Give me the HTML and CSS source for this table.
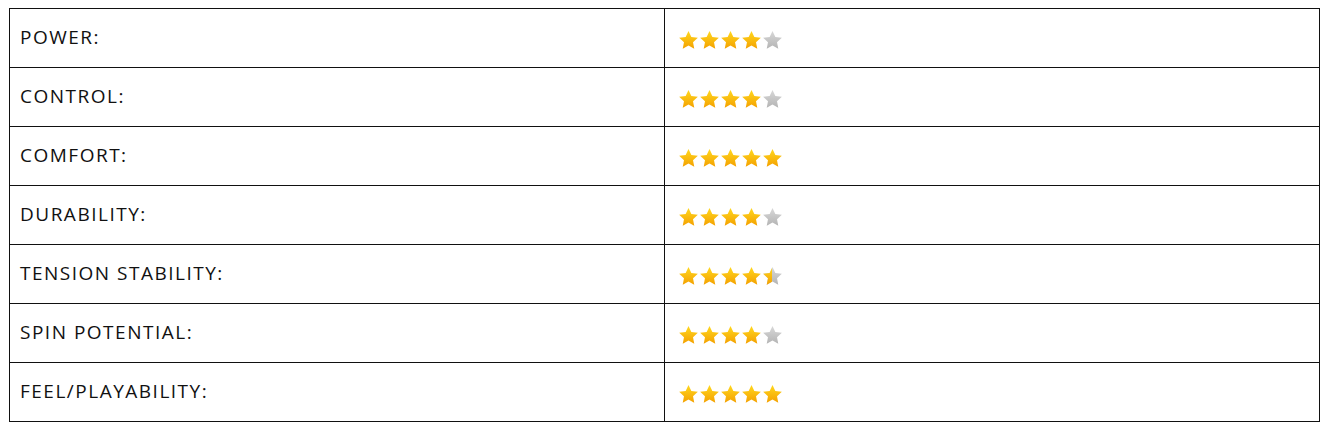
FILE: index.html
```html
<!DOCTYPE html>
<html lang="en">
<head>
  <meta charset="UTF-8">
  <title>Ratings</title>
  <link rel="stylesheet" href="styles.css">
</head>
<body>
  <svg width="0" height="0" style="position:absolute">
    <defs>
      <linearGradient id="gold" x1="0" y1="0" x2="0" y2="1">
        <stop offset="0" stop-color="#ffd81f"/>
        <stop offset="1" stop-color="#f4a100"/>
      </linearGradient>
      <linearGradient id="grey" x1="0" y1="0" x2="0" y2="1">
        <stop offset="0" stop-color="#d8d8d8"/>
        <stop offset="1" stop-color="#b4b4b4"/>
      </linearGradient>
      <clipPath id="left-half"><rect x="0" y="0" width="9.5" height="20"/></clipPath>
      <symbol id="star" viewBox="0 0 20 20">
        <path d="M10 1l2.7 5.7 6.2.7-4.6 4.2 1.2 6.2L10 14.8l-5.5 3 1.2-6.2L1.1 7.4l6.2-.7z"/>
      </symbol>
    </defs>
  </svg>

  <table class="specs">
    <tr>
      <td class="label">POWER:</td>
      <td class="stars"><svg class="star on"><use href="#star"/></svg><svg class="star on"><use href="#star"/></svg><svg class="star on"><use href="#star"/></svg><svg class="star on"><use href="#star"/></svg><svg class="star off"><use href="#star"/></svg></td>
    </tr>
    <tr>
      <td class="label">CONTROL:</td>
      <td class="stars"><svg class="star on"><use href="#star"/></svg><svg class="star on"><use href="#star"/></svg><svg class="star on"><use href="#star"/></svg><svg class="star on"><use href="#star"/></svg><svg class="star off"><use href="#star"/></svg></td>
    </tr>
    <tr>
      <td class="label">COMFORT:</td>
      <td class="stars"><svg class="star on"><use href="#star"/></svg><svg class="star on"><use href="#star"/></svg><svg class="star on"><use href="#star"/></svg><svg class="star on"><use href="#star"/></svg><svg class="star on"><use href="#star"/></svg></td>
    </tr>
    <tr>
      <td class="label">DURABILITY:</td>
      <td class="stars"><svg class="star on"><use href="#star"/></svg><svg class="star on"><use href="#star"/></svg><svg class="star on"><use href="#star"/></svg><svg class="star on"><use href="#star"/></svg><svg class="star off"><use href="#star"/></svg></td>
    </tr>
    <tr>
      <td class="label">TENSION STABILITY:</td>
      <td class="stars"><svg class="star on"><use href="#star"/></svg><svg class="star on"><use href="#star"/></svg><svg class="star on"><use href="#star"/></svg><svg class="star on"><use href="#star"/></svg><svg class="star off" viewBox="0 0 20 20"><use href="#star"/><use href="#star" class="half" clip-path="url(#left-half)"/></svg></td>
    </tr>
    <tr>
      <td class="label">SPIN POTENTIAL:</td>
      <td class="stars"><svg class="star on"><use href="#star"/></svg><svg class="star on"><use href="#star"/></svg><svg class="star on"><use href="#star"/></svg><svg class="star on"><use href="#star"/></svg><svg class="star off"><use href="#star"/></svg></td>
    </tr>
    <tr>
      <td class="label">FEEL/PLAYABILITY:</td>
      <td class="stars"><svg class="star on"><use href="#star"/></svg><svg class="star on"><use href="#star"/></svg><svg class="star on"><use href="#star"/></svg><svg class="star on"><use href="#star"/></svg><svg class="star on"><use href="#star"/></svg></td>
    </tr>
  </table>
</body>
</html>
```

FILE: styles.css
```css
body {
  margin: 0;
  padding: 8px 3px 0 9px;
  background: #ffffff;
  font-family: "Open Sans", Arial, sans-serif;
  color: #111111;
}

.specs {
  width: 1311px;
  border-collapse: collapse;
  table-layout: fixed;
}

.specs td {
  border: 1px solid #111111;
  height: 59px;
  padding: 0 10px;
  vertical-align: middle;
  box-sizing: border-box;
}

.label {
  font-size: 19px;
  letter-spacing: 1.5px;
  padding-bottom: 3px !important;
}

.stars {
  padding-left: 13px !important;
  padding-top: 5px !important;
  font-size: 0;
}

.star {
  width: 21px;
  height: 21px;
}

.star.on {
  fill: url(#gold);
}

.star.off {
  fill: url(#grey);
}

.star .half {
  fill: url(#gold);
}
```
